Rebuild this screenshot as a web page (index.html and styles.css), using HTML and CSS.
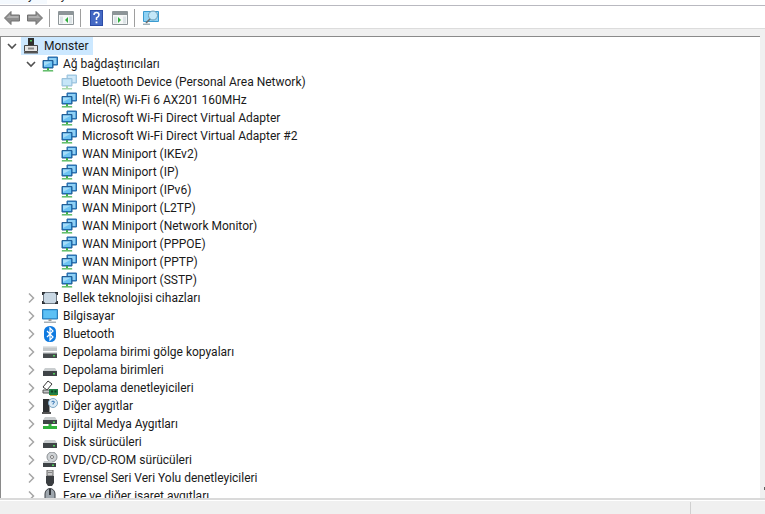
FILE: index.html
```html
<!DOCTYPE html>
<html lang="tr">
<head>
<meta charset="utf-8">
<title>Aygıt Yöneticisi</title>
<link rel="stylesheet" href="styles.css">
</head>
<body>
<svg class="defs" width="0" height="0">
  <defs>
    <symbol id="net" viewBox="0 0 16 16">
      <path d="M6 1h9.500v8H6z" fill="#2b7cc4" stroke="#2a6da8"/>
      <path d="M7 2h7.500v6H7z" fill="#8fd0f5"/>
      <path d="M1 4.500h10v7.500H1z" fill="#1f78c4" stroke="#245f94"/>
      <path d="M2 5.500h8v5.500H2z" fill="#6cc3f2"/>
      <path d="M2 5.500h8L2 10z" fill="#a5ddf8"/>
      <path d="M5 12h2v2H5z" fill="#3fae49"/>
      <path d="M1 14h10v1.500H1z" fill="#3fae49"/>
      <path d="M0 14.500h12v1H0z" fill="#bfe3c2" opacity=".6"/>
    </symbol>
    <symbol id="net-dim" viewBox="0 0 16 16">
      <path d="M6 1h9.500v8H6z" fill="#a9d0ea" stroke="#a0c6df"/>
      <path d="M7 2h7.500v6H7z" fill="#cfe8f8"/>
      <path d="M1 4.500h10v7.500H1z" fill="#a8d2ee" stroke="#9dc2da"/>
      <path d="M2 5.500h8v5.500H2z" fill="#c6e6f8"/>
      <path d="M5 12h2v2H5z" fill="#a8d8ac"/>
      <path d="M1 14h10v1.500H1z" fill="#a8d8ac"/>
    </symbol>
    <symbol id="computer" viewBox="0 0 16 16">
      <path d="M5 0h6v7H5z" fill="#2f2f2f"/>
      <path d="M7 2h2v1.500H7z" fill="#4fc05a"/>
      <path d="M1.500 7.500h13v6h-13z" fill="#e6e6e6" stroke="#4a4a4a"/>
      <path d="M5 9.500h6v2H5z" fill="#8a8a8a"/>
      <path d="M1 14h14v1.500H1z" fill="#555"/>
    </symbol>
    <symbol id="memory" viewBox="0 0 16 16">
      <rect x="1.500" y="2.500" width="13" height="11" rx="1.500" fill="#c9d8e4" stroke="#6f7a84"/>
      <path d="M0 2h3v1.500H1.500V5H0zM13 2h3v3h-1.500V3.500H13zM0 11h1.500v1.500H3V14H0zM14.500 11H16v3h-3v-1.500h1.500z" fill="#2c3034"/>
    </symbol>
    <symbol id="monitor" viewBox="0 0 16 16">
      <path d="M.500 1.500h15v9.500H.500z" fill="#3aa0e2" stroke="#2d7fb8"/>
      <path d="M1.500 2.500h13v7.500h-13z" fill="#5cc0f4"/>
      <path d="M6.500 11h3v2h-3z" fill="#9a9a9a"/>
      <path d="M2 13.500h12v1.500H2z" fill="#a8b0b6"/>
    </symbol>
    <symbol id="bt" viewBox="0 0 16 16">
      <rect x="2" y="0" width="12" height="16" rx="5.500" fill="#0f7ae0"/>
      <path d="M5 5l6 6-3 3V2l3 3-6 6" fill="none" stroke="#fff" stroke-width="1.200"/>
    </symbol>
    <symbol id="shadow" viewBox="0 0 16 16">
      <path d="M1 2h14v5H1z" fill="#c2c6c8"/>
      <path d="M1 2h14v1.500H1z" fill="#e4e6e7"/>
      <path d="M1 8h14v6H1z" fill="#454a4d"/>
      <path d="M1 8h14v1.500H1z" fill="#d3d6d8"/>
      <path d="M11 11h2v1.500h-2z" fill="#52d05c"/>
    </symbol>
    <symbol id="disk" viewBox="0 0 16 16">
      <path d="M3 6h10l2 3H1z" fill="#c9cdcf"/>
      <path d="M1 9h14v5H1z" fill="#3f4447"/>
      <path d="M11 11h2v1.500h-2z" fill="#52d05c"/>
    </symbol>
    <symbol id="controller" viewBox="0 0 16 16">
      <path d="M1 7l5-6 4 3-5 6z" fill="#fff" stroke="#3a3a3a"/>
      <path d="M1 10h9v3H1z" fill="#c3c6c8" stroke="#555"/>
      <path d="M7 9h9v6H7z" fill="#1f7f46"/>
      <path d="M9 10.500h2v2H9zM12.500 10.500h2v2h-2z" fill="#0e3f22"/>
      <path d="M8 15h7v1H8z" fill="#d8b13e"/>
    </symbol>
    <symbol id="other" viewBox="0 0 16 16">
      <path d="M1 1h6.500v13H1z" fill="#2c2f31"/>
      <path d="M0 14h9v2H0z" fill="#555"/>
      <circle cx="11" cy="5" r="4.500" fill="#dcebf6" stroke="#7fa9c6"/>
      <path d="M9.500 3.800q1.500-1.500 3 0 0 1-1.500 1.700v1" fill="none" stroke="#2a6fb0" stroke-width="1"/>
    </symbol>
    <symbol id="media" viewBox="0 0 16 16">
      <path d="M3 1h10l2 3H1z" fill="#c9cdcf"/>
      <path d="M1 4h14v4H1z" fill="#3f4447"/>
      <path d="M11 5.500h2V7h-2z" fill="#52d05c"/>
      <path d="M6.500 8h3v2h-3z" fill="#2fb13a"/>
      <path d="M1 10h14v3H1z" fill="#2fb13a"/>
    </symbol>
    <symbol id="dvd" viewBox="0 0 16 16">
      <circle cx="10" cy="5" r="5" fill="#cfd3d6" stroke="#8b9094"/>
      <circle cx="10" cy="5" r="1.500" fill="#fff" stroke="#777"/>
      <path d="M2 9h8v2H1z" fill="#c9cdcf"/>
      <path d="M1 11h13v4H1z" fill="#3f4447"/>
      <path d="M10 12.500h2V14h-2z" fill="#52d05c"/>
    </symbol>
    <symbol id="usb" viewBox="0 0 16 16">
      <path d="M5 0h6v6H5z" fill="#c8c8c8" stroke="#666"/>
      <path d="M6.500 2h1v1h-1zM8.500 2h1v1h-1z" fill="#444"/>
      <path d="M4 6h8v7l-2 3H6l-2-3z" fill="#3a3d40"/>
    </symbol>
    <symbol id="mouse" viewBox="0 0 16 16">
      <path d="M3 6a5 5.500 0 0 1 10 0v6a5 4 0 0 1-10 0z" fill="#9fa7ae" stroke="#3d4146"/>
      <path d="M7 1h2v6H7z" fill="#33373b"/>
    </symbol>
    <symbol id="down" viewBox="0 0 10 10">
      <path d="M1 3l4 4 4-4" fill="none" stroke="#505050" stroke-width="1.600"/>
    </symbol>
    <symbol id="right" viewBox="0 0 10 10">
      <path d="M3 .500l4.500 4.500L3 9.500" fill="none" stroke="#a6a6a6" stroke-width="1.500"/>
    </symbol>
  </defs>
</svg>

<div class="window">
  <div class="menubar">
    <span class="menu-item menu-active">Dosya</span>
    <span class="menu-item">Eylem</span>
    <span class="menu-item">Görünüm</span>
    <span class="menu-item">Yardım</span>
  </div>

  <div class="toolbar">
    <svg class="tool tool-arrow tool-arrow-first" viewBox="0 0 16 14"><path d="M.500 7l6.500-6.500v3.500h8.500v6H7v3.500z" fill="#8e8e8e" stroke="#707070"/><path d="M2.500 7l3.500-3.500V5h8.500v2z" fill="#b0b0b0"/></svg>
    <svg class="tool tool-arrow" viewBox="0 0 16 14"><path d="M15.500 7L9 .500V4H.500v6H9v3.500z" fill="#8e8e8e" stroke="#707070"/><path d="M1.500 5H10V3.500L13.500 7h-12z" fill="#b0b0b0"/></svg>
    <span class="sep"></span>
    <svg class="tool" viewBox="0 0 16 14"><path d="M.500.500h15v13H.500z" fill="#f6f8f8" stroke="#8d9598"/><path d="M1 1h14v3H1z" fill="#8d9598"/><path d="M2 5.500h3v7H2zM11 5.500h3v7h-3z" fill="#dce3e6"/><path d="M7 9l3-3v6z" fill="#2fae3c"/></svg>
    <span class="sep"></span>
    <svg class="tool tool-help" viewBox="0 0 13 16"><path d="M0 0h13v16H0z" fill="#2d4da8"/><path d="M1 1h11v14H1z" fill="#4469c4"/><path d="M4 5q0-2.500 2.500-2.500T9 5q0 1.500-2.500 3v2" fill="none" stroke="#fff" stroke-width="1.500"/><path d="M5.600 11.500h1.800v1.800H5.600z" fill="#fff"/></svg>
    <svg class="tool tool-gap" viewBox="0 0 16 14"><path d="M.500.500h15v13H.500z" fill="#f6f8f8" stroke="#8d9598"/><path d="M1 1h14v3H1z" fill="#8d9598"/><path d="M2 5.500h3v7H2zM11 5.500h3v7h-3z" fill="#dce3e6"/><path d="M6 6l3 3-3 3z" fill="#2fae3c"/></svg>
    <span class="sep"></span>
    <svg class="tool tool-scan" viewBox="0 0 16 16"><path d="M.500 1.500h15v10H.500z" fill="#8fd2f4" stroke="#3b9bd0"/><circle cx="10" cy="5.500" r="4.500" fill="#c4e8f9" stroke="#6c9cb5"/><path d="M7 9l-4 4" stroke="#6d6d6d" stroke-width="1.600"/><path d="M0 13.500h7v1.500H0z" fill="#9eb0b8"/></svg>
  </div>

  <div class="band"></div>

  <div class="content">
    <main class="tree">
      <div class="row lvl0"><svg class="twisty twisty-root"><use href="#down"/></svg><div class="selected"><svg class="icon"><use href="#computer"/></svg><span class="label">Monster</span></div></div>
      <div class="row lvl1"><svg class="twisty"><use href="#down"/></svg><svg class="icon"><use href="#net"/></svg><span class="label">Ağ bağdaştırıcıları</span></div>
      <div class="row lvl2"><svg class="icon"><use href="#net-dim"/></svg><span class="label">Bluetooth Device (Personal Area Network)</span></div>
      <div class="row lvl2"><svg class="icon"><use href="#net"/></svg><span class="label">Intel(R) Wi-Fi 6 AX201 160MHz</span></div>
      <div class="row lvl2"><svg class="icon"><use href="#net"/></svg><span class="label">Microsoft Wi-Fi Direct Virtual Adapter</span></div>
      <div class="row lvl2"><svg class="icon"><use href="#net"/></svg><span class="label">Microsoft Wi-Fi Direct Virtual Adapter #2</span></div>
      <div class="row lvl2"><svg class="icon"><use href="#net"/></svg><span class="label">WAN Miniport (IKEv2)</span></div>
      <div class="row lvl2"><svg class="icon"><use href="#net"/></svg><span class="label">WAN Miniport (IP)</span></div>
      <div class="row lvl2"><svg class="icon"><use href="#net"/></svg><span class="label">WAN Miniport (IPv6)</span></div>
      <div class="row lvl2"><svg class="icon"><use href="#net"/></svg><span class="label">WAN Miniport (L2TP)</span></div>
      <div class="row lvl2"><svg class="icon"><use href="#net"/></svg><span class="label">WAN Miniport (Network Monitor)</span></div>
      <div class="row lvl2"><svg class="icon"><use href="#net"/></svg><span class="label">WAN Miniport (PPPOE)</span></div>
      <div class="row lvl2"><svg class="icon"><use href="#net"/></svg><span class="label">WAN Miniport (PPTP)</span></div>
      <div class="row lvl2"><svg class="icon"><use href="#net"/></svg><span class="label">WAN Miniport (SSTP)</span></div>
      <div class="row lvl1"><svg class="twisty"><use href="#right"/></svg><svg class="icon"><use href="#memory"/></svg><span class="label">Bellek teknolojisi cihazları</span></div>
      <div class="row lvl1"><svg class="twisty"><use href="#right"/></svg><svg class="icon"><use href="#monitor"/></svg><span class="label">Bilgisayar</span></div>
      <div class="row lvl1"><svg class="twisty"><use href="#right"/></svg><svg class="icon"><use href="#bt"/></svg><span class="label">Bluetooth</span></div>
      <div class="row lvl1"><svg class="twisty"><use href="#right"/></svg><svg class="icon"><use href="#shadow"/></svg><span class="label">Depolama birimi gölge kopyaları</span></div>
      <div class="row lvl1"><svg class="twisty"><use href="#right"/></svg><svg class="icon"><use href="#disk"/></svg><span class="label">Depolama birimleri</span></div>
      <div class="row lvl1"><svg class="twisty"><use href="#right"/></svg><svg class="icon"><use href="#controller"/></svg><span class="label">Depolama denetleyicileri</span></div>
      <div class="row lvl1"><svg class="twisty"><use href="#right"/></svg><svg class="icon"><use href="#other"/></svg><span class="label">Diğer aygıtlar</span></div>
      <div class="row lvl1"><svg class="twisty"><use href="#right"/></svg><svg class="icon"><use href="#media"/></svg><span class="label">Dijital Medya Aygıtları</span></div>
      <div class="row lvl1"><svg class="twisty"><use href="#right"/></svg><svg class="icon"><use href="#disk"/></svg><span class="label">Disk sürücüleri</span></div>
      <div class="row lvl1"><svg class="twisty"><use href="#right"/></svg><svg class="icon"><use href="#dvd"/></svg><span class="label">DVD/CD-ROM sürücüleri</span></div>
      <div class="row lvl1"><svg class="twisty"><use href="#right"/></svg><svg class="icon"><use href="#usb"/></svg><span class="label">Evrensel Seri Veri Yolu denetleyicileri</span></div>
      <div class="row lvl1"><svg class="twisty"><use href="#right"/></svg><svg class="icon"><use href="#mouse"/></svg><span class="label">Fare ve diğer işaret aygıtları</span></div>
    </main>
    <div class="scrollbar"><span class="thumb-mark"></span></div>
  </div>

  <footer class="statusbar">
    <div class="status-main"></div>
    <div class="status-cell"></div>
  </footer>
</div>
</body>
</html>
```

FILE: styles.css
```css
html, body {
  margin: 0;
  padding: 0;
  height: 100%;
  overflow: hidden;
}

body {
  background: #fff;
  font-family: Roboto, "Noto Sans", sans-serif;
  font-size: 12px;
  color: #1a1a1a;
}

.defs {
  display: block;
  height: 0;
}

.window {
  width: 765px;
  height: 514px;
  display: flex;
  flex-direction: column;
}

.menubar {
  height: 5px;
  flex: none;
  display: flex;
  align-items: flex-start;
  overflow: hidden;
  border-bottom: 1px solid #b9b9c0;
  background: #fff;
}

.menu-item {
  height: 18px;
  line-height: 18px;
  margin-top: -14px;
  padding: 0 7px;
  flex: none;
}

.menu-active {
  background: #f4f9fe;
}

.toolbar {
  height: 22px;
  flex: none;
  display: flex;
  align-items: center;
  padding: 2px 0 0 4px;
  background: #fff;
  box-sizing: border-box;
}

.tool {
  width: 16px;
  height: 14px;
  flex: none;
}

.tool-arrow-first {
  margin-right: 7px;
}

.tool-help {
  width: 13px;
  height: 16px;
  margin-left: 1px;
}

.tool-gap {
  margin-left: 9px;
}

.tool-scan {
  height: 16px;
}

.sep {
  width: 1px;
  height: 18px;
  background: #9e9e9e;
  margin: 0 8px 0 6px;
  flex: none;
}

.band {
  height: 8px;
  flex: none;
  background: #f0f0f0;
  border-top: 1px solid #dcdcdc;
  box-sizing: border-box;
}

.content {
  height: 462px;
  flex: none;
  display: flex;
  overflow: hidden;
  border-left: 1px solid #8a8a8a;
}

.tree {
  flex: 1;
  overflow: hidden;
  background: #fff;
  min-width: 0;
  border-top: 1px solid #8a8a8a;
}

.scrollbar {
  width: 5px;
  flex: none;
  background: #f0f0f0;
  position: relative;
}

.thumb-mark {
  position: absolute;
  right: 0;
  top: 451px;
  width: 1px;
  height: 3px;
  background: #606060;
}

.row {
  height: 18px;
  display: flex;
  align-items: center;
  white-space: nowrap;
}

.lvl0 { padding-left: 6px; }
.lvl1 { padding-left: 25px; }
.lvl2 { padding-left: 60px; }

.twisty {
  width: 10px;
  height: 10px;
  flex: none;
  margin-right: 6px;
}

.twisty-root {
  margin-right: 4px;
}

.icon {
  width: 16px;
  height: 16px;
  flex: none;
}

.label {
  padding: 0 4px 0 5px;
  line-height: 18px;
  height: 18px;
}

.selected {
  display: flex;
  align-items: center;
  height: 18px;
  padding-left: 2px;
  background: #cce8ff;
}

.statusbar {
  flex: 1;
  display: flex;
  background: #f0f0f0;
  border-top: 2px solid #dadada;
  box-shadow: inset 0 1px 0 #fff;
}

.status-main {
  width: 690px;
  flex: none;
  border-right: 1px solid #d0d0d0;
  margin-top: 2px;
}

.status-cell {
  flex: 1;
}
```
